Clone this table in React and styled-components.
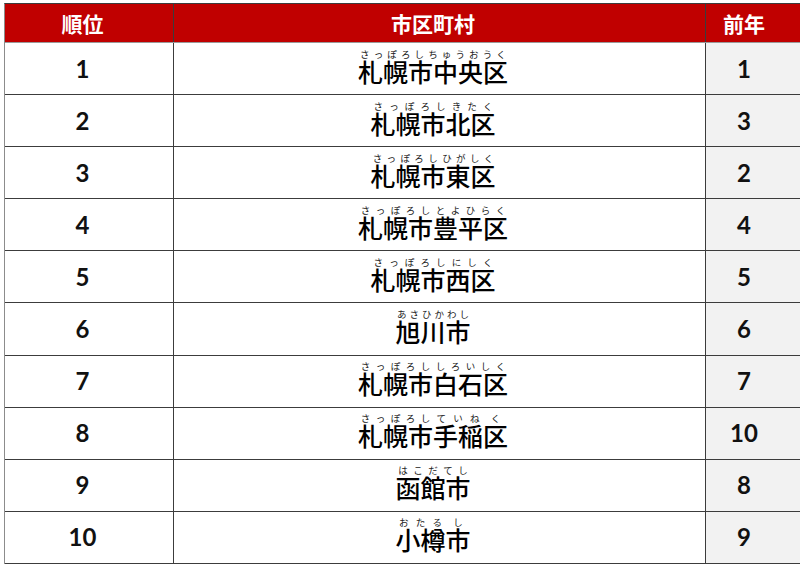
import React from "react";
import styled, { createGlobalStyle } from "styled-components";

const Global = createGlobalStyle`
  html, body { margin: 0; padding: 0; background: #ffffff; }
  body { font-family: "Noto Sans CJK JP", "Noto Sans", sans-serif; }
`;

const Page = styled.div`
  width: 800px;
  height: 568px;
  overflow: hidden;
  padding: 3px 0 0 4px;
  box-sizing: border-box;
`;

const Table = styled.div`
  width: 820px;
  border-top: 1px solid #3c3c3c;
  border-left: 1px solid #8c8c8c;
  display: flex;
  flex-direction: column;
`;

const Row = styled.div`
  display: grid;
  grid-template-columns: 169px 532px 1fr;
  height: ${(p) => (p.$head ? "39px" : "52.1px")};
  box-sizing: border-box;
  border-bottom: 1px solid ${(p) => (p.$head ? "#9a9a9a" : "#3c3c3c")};
  background: ${(p) => (p.$head ? "#c00000" : "#ffffff")};
`;

const Cell = styled.div`
  display: flex;
  align-items: center;
  justify-content: center;
  box-sizing: border-box;
  border-right: 1px solid #3c3c3c;
  padding-right: ${(p) => p.$pr}px;
  padding-bottom: ${(p) => p.$pb || 0}px;
  background: ${(p) => (p.$gray ? "#f2f2f2" : "transparent")};
`;

const HeadText = styled.span`
  color: #ffffff;
  font-family: "Noto Sans CJK JP", sans-serif;
  font-weight: 700;
  font-size: 21px;
  line-height: 1;
`;

const Num = styled.span`
  font-family: Lato, "Open Sans", sans-serif;
  font-weight: 700;
  font-size: 24px;
  color: #111111;
  line-height: 1;
`;

const Name = styled.span`
  display: inline-flex;
  align-items: flex-end;
`;

const Group = styled.span`
  display: inline-flex;
  flex-direction: column;
  align-items: stretch;
`;

const Reading = styled.span`
  display: flex;
  justify-content: space-around;
  font-family: "Noto Sans CJK JP", sans-serif;
  font-size: 9.5px;
  line-height: 10px;
  color: #222222;
  width: 0;
  min-width: 100%;
`;

const Base = styled.span`
  font-family: "Noto Sans CJK JP", sans-serif;
  font-weight: 500;
  font-size: 25px;
  line-height: 25px;
  color: #000000;
  white-space: nowrap;
`;

const rows = [
  { rank: "1", prev: "1", name: [["札幌市中央区", "さっぽろしちゅうおうく"]] },
  { rank: "2", prev: "3", name: [["札幌市北区", "さっぽろしきたく"]] },
  { rank: "3", prev: "2", name: [["札幌市東区", "さっぽろしひがしく"]] },
  { rank: "4", prev: "4", name: [["札幌市豊平区", "さっぽろしとよひらく"]] },
  { rank: "5", prev: "5", name: [["札幌市西区", "さっぽろしにしく"]] },
  { rank: "6", prev: "6", name: [["旭川市", "あさひかわし"]] },
  { rank: "7", prev: "7", name: [["札幌市白石区", "さっぽろししろいしく"]] },
  {
    rank: "8",
    prev: "10",
    name: [
      ["札幌市", "さっぽろし"],
      ["手稲", "ていね"],
      ["区", "く"],
    ],
  },
  { rank: "9", prev: "8", name: [["函館市", "はこだてし"]] },
  {
    rank: "10",
    prev: "9",
    name: [
      ["小樽", "おたる"],
      ["市", "し"],
    ],
  },
];

function Furigana({ groups }) {
  return (
    <Name>
      {groups.map(([base, reading], i) => (
        <Group key={i}>
          <Reading>
            {Array.from(reading).map((k, j) => (
              <span key={j}>{k}</span>
            ))}
          </Reading>
          <Base>{base}</Base>
        </Group>
      ))}
    </Name>
  );
}

export default function App() {
  return (
    <>
      <Global />
      <Page>
        <Table>
          <Row $head>
            <Cell $pr={13}>
              <HeadText>順位</HeadText>
            </Cell>
            <Cell $pr={13}>
              <HeadText>市区町村</HeadText>
            </Cell>
            <Cell $pr={42}>
              <HeadText>前年</HeadText>
            </Cell>
          </Row>
          {rows.map((r) => (
            <Row key={r.rank}>
              <Cell $pr={13}>
                <Num>{r.rank}</Num>
              </Cell>
              <Cell $pr={13} $pb={5}>
                <Furigana groups={r.name} />
              </Cell>
              <Cell $pr={42} $gray>
                <Num>{r.prev}</Num>
              </Cell>
            </Row>
          ))}
        </Table>
      </Page>
    </>
  );
}
